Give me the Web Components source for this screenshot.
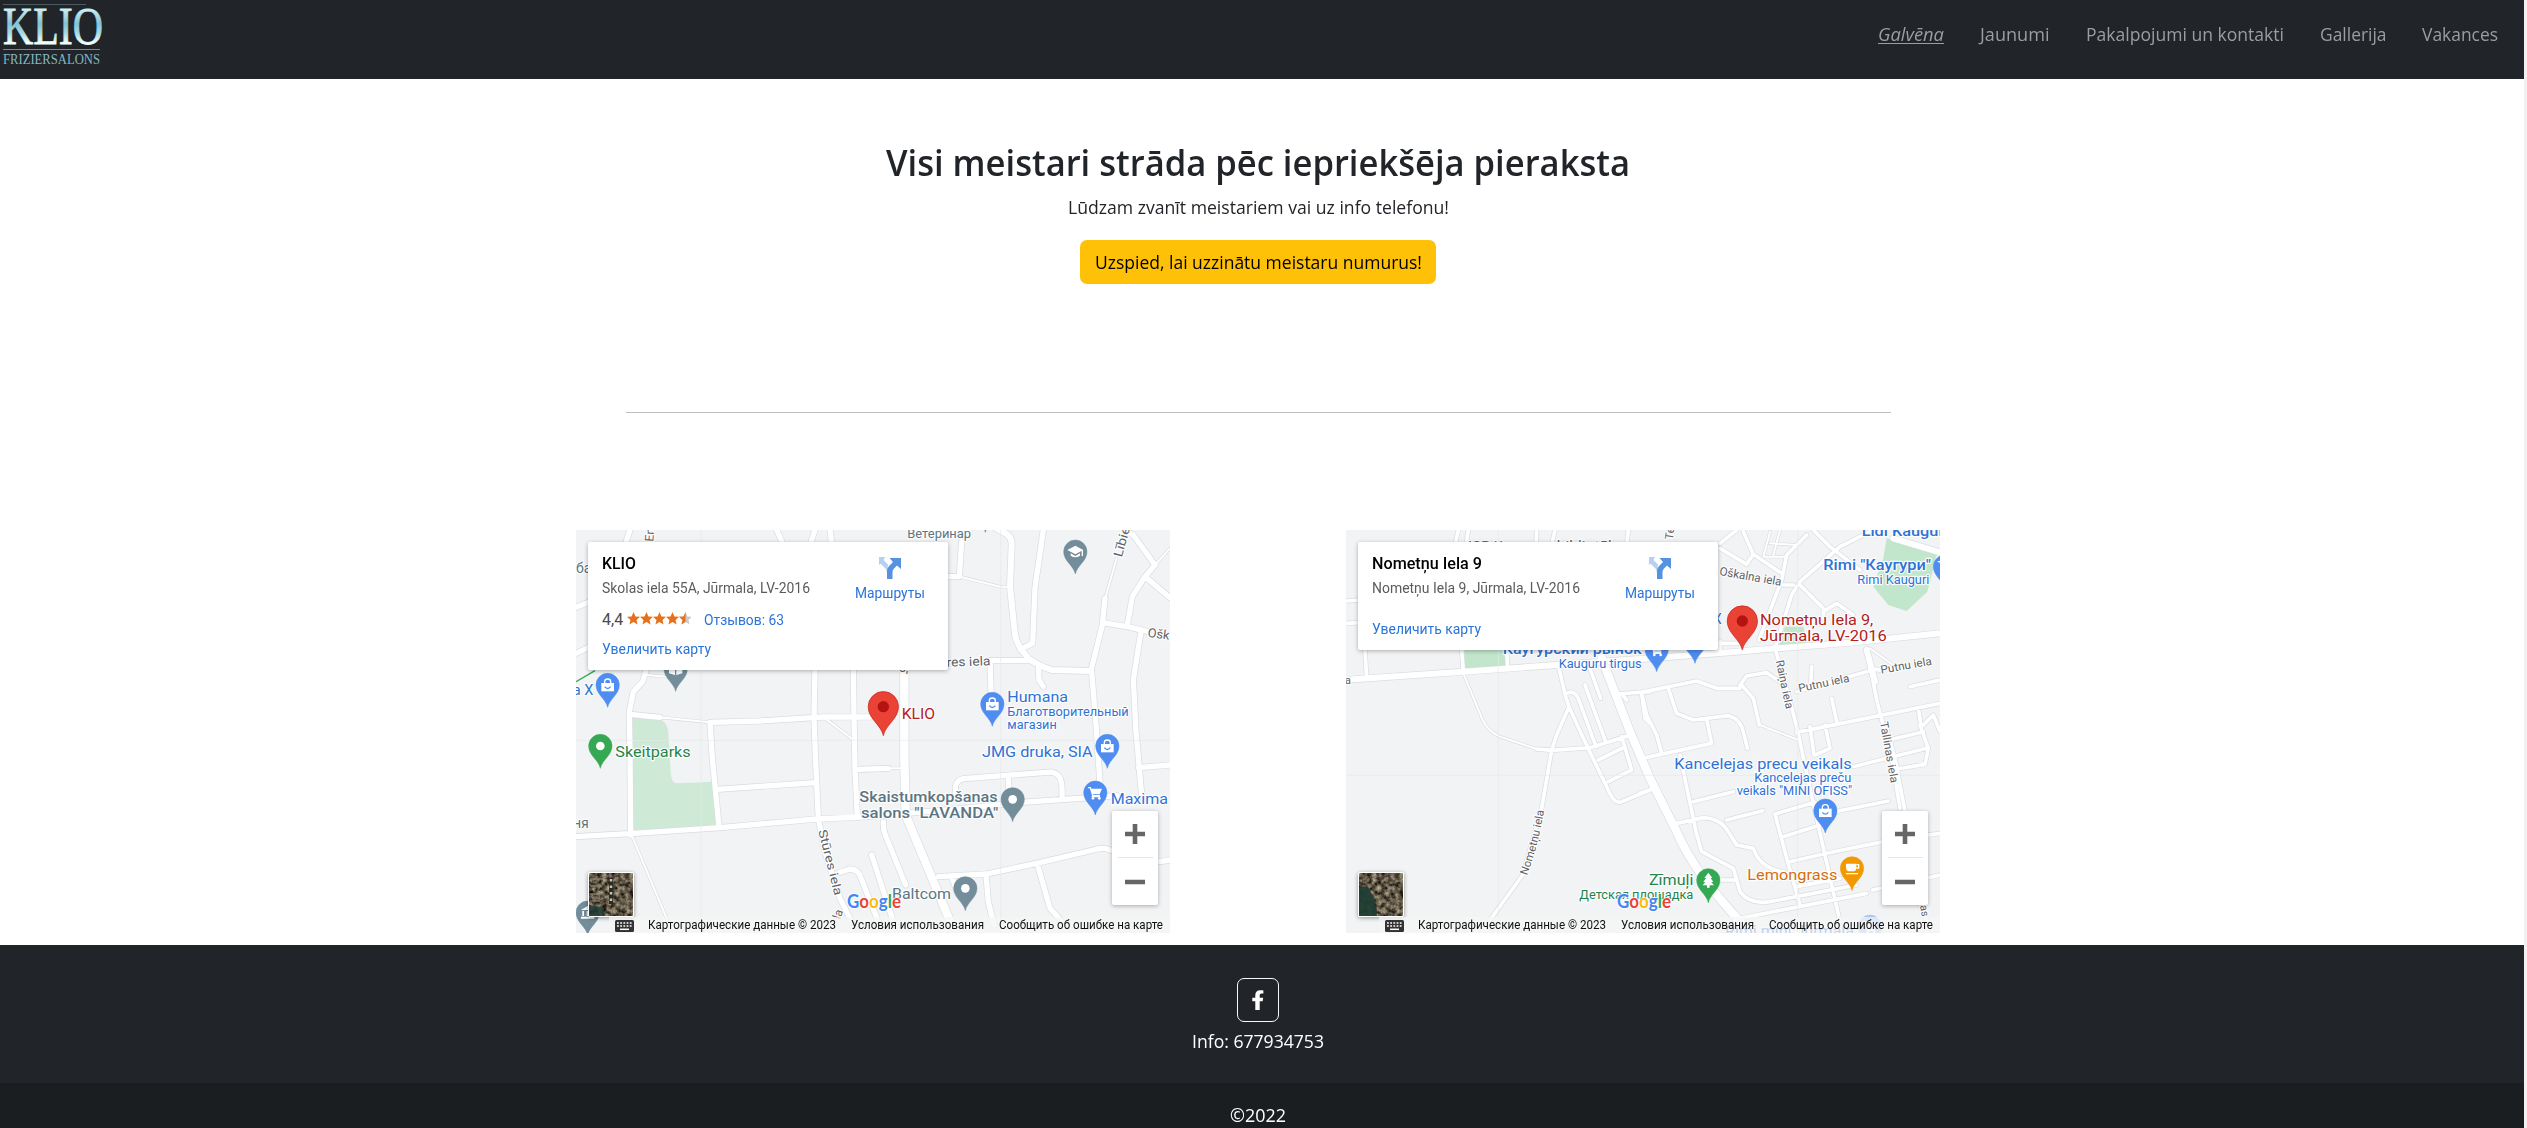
<!DOCTYPE html>
<html lang="lv">
<head>
<meta charset="utf-8">
<title>KLIO</title>
<style>
html,body{margin:0;height:1128px;overflow:hidden;background:#fff}
body{font-family:"Open Sans","Noto Sans",sans-serif;font-size:18.4px;line-height:28px;color:#212529}
</style>
</head>
<body>
<klio-page></klio-page>

<template id="roads-klio"><svg>
  <path class="g" d="M187 575L270 583Q290 590 295 620L302 740Q304 775 320 775L430 770L438 902L190 915Z"/>
  <g data-roads="">
    <path class="t" d="M230 450L290 455M268 577L420 592M765 580L855 648M950 730H1000M187 935L292 1185M1170 155L1290 185H1318M1755 120L1800 70M1640 100L1605 222"/>
    <path d="M180 15L165 60M228 435L218 470L190 500L178 560L180 690L182 930M18 247L60 230M18 385L60 365M620 15L640 60M735 15L720 60M780 15L785 60M180 568L270 577M420 592L570 588L730 578L760 576H900M735 435L732 575L736 690L745 880M850 435L852 575L855 730L862 878M420 592L427 700L447 906M440 793L735 773M18 935L180 926L450 908L740 882L870 876L1000 866L1180 850L1355 832L1560 818L1640 812M865 733L955 730M745 880L765 980L810 1120L845 1190M810 1042L840 1032Q865 1032 873 1060L925 1190M940 890Q938 915 950 940L1007 1080M905 990L970 1190M1158 810L1156 785Q1160 765 1180 761L1430 742Q1455 738 1468 755Q1478 770 1476 818M1315 755L1317 830M1565 440L1578 600L1590 775M1605 220L1597 300L1562 440M1680 25L1690 30L1755 120L1725 155L1800 218M1725 155L1687 215L1672 300M1597 293L1672 305L1735 320M1712 325L1690 465L1698 620L1715 810M1705 728L1800 720M1420 15L1395 187L1388 355L1350 373M1135 155H1168L1175 50M1260 407H1380M1260 407L1263 500M1405 430L1407 465L1420 485M1105 1055L1250 1047L1400 1015L1570 975Q1600 965 1620 975L1770 1010L1800 1005M1145 1057L1160 1095M1248 1050L1255 1130L1272 1200M1402 1017L1440 1150L1480 1195L1540 1205"/>
    <path class="m" d="M1270 5L1300 22Q1325 30 1325 60L1320 185L1335 330Q1340 360 1375 400Q1400 420 1445 435L1562 438"/>
    <path class="b" d="M1003 440V700L1007 870L1145 1200"/>
  </g>
  <path d="M393 15V1224M1292 15V1224M18 646H1800" stroke="#e6e8ea" stroke-width="2" fill="none"/>
  <g class="slate">
    <text x="1012" y="38" textLength="191" font-size="36">Ветеринар</text>
    <text x="18" y="145" font-size="42">ба</text>
    <text x="10" y="908" font-size="42" textLength="46">ня</text>
    <g font-weight="500"><text x="868" y="832" textLength="415" font-size="45">Skaistumkopšanas</text>
    <text x="873" y="880" textLength="412" font-size="45">salons "LAVANDA"</text></g>
    <text x="966" y="1123" textLength="177" font-size="45">Baltcom</text>
  </g>
  <g class="street">
    <text transform="translate(250 50) rotate(-86)" font-size="36">En</text>
    <text x="988" y="440" font-size="38">s,</text>
    <text transform="translate(1130 425) rotate(-2)" textLength="132" font-size="38">res iela</text>
    <text transform="translate(1732 335) rotate(8)" font-size="38">Ošk</text>
    <text transform="translate(1655 98) rotate(-74)" textLength="92" font-size="38">Lībie</text>
    <text transform="translate(745 917) rotate(76)" textLength="202" font-size="36">Stūres iela</text>
    <text transform="translate(810 1185) rotate(-70)" font-size="36">la</text>
  </g>
  <g class="blue">
    <text x="8" y="510" textLength="62" font-size="43">а X</text>
    <text x="1312" y="532" textLength="182" font-size="45">Humana</text>
    <text x="1312" y="572" textLength="364" font-size="36">Благотворительный</text>
    <text x="1312" y="611" textLength="148" font-size="36">магазин</text>
    <text x="1236" y="696" textLength="332" font-size="45">JMG druka, SIA</text>
    <text x="1622" y="836" textLength="172" font-size="45">Maxima</text>
  </g>
  <text class="green" x="136" y="696" textLength="226" font-size="45">Skeitparks</text>
  <path d="M18 470L75 437" stroke="#34a853" stroke-width="4"/>
  <g data-pin="113 480 #4f8df0 bag"></g><g data-pin="317 432 #738d9a book"></g>
  <g data-pin="1516 80 #738d9a school"></g><g data-pin="1246 -45 #738d9a dot"></g>
  <g data-pin="1267 537 #4f8df0 bag"></g><g data-pin="91 663 #34a853 dot"></g>
  <g data-pin="1612 663 #4f8df0 bag"></g><g data-pin="1576 803 #4f8df0 cart"></g>
  <g data-pin="1328 823 #738d9a dot"></g><g data-pin="1186 1090 #738d9a dot"></g>
  <g data-pin="53 1163 #738d9a museum"></g><g data-pin="940 545 #ea4335 red"></g>
  <text class="red" x="995" y="582" textLength="100" font-size="46">KLIO</text>
</svg></template>

<template id="roads-nometnu"><svg>
  <path class="g2" d="M373 375H495V432L373 438ZM1640 40L1790 90L1762 200L1700 258L1645 240L1600 185L1630 100ZM1335 305H1390L1400 355L1315 368Z"/>
  <g data-roads="">
    <path class="t" d="M370 445L428 585Q445 620 480 635L590 672M1590 370L1660 420M1260 600L1375 645M1270 95L1290 20M1270 95H1340M1290 55L1370 60M1320 15L1300 90"/>
    <path d="M355 15L345 60M385 15L378 60M590 15L588 60M645 15L635 60M865 15L860 60M18 228L60 225M18 295L60 293M75 375L80 460M365 375L370 440M500 375L503 430M590 672L635 676L750 668L865 632M655 420L675 508L687 545L650 630L635 675L605 850L548 1050L450 1185M687 545L730 640L800 785Q820 835 840 832L930 795M675 508Q700 490 715 520L768 665M735 480L797 650M750 430L782 520M830 507L930 500M845 507L860 525M905 507L915 580L930 595M775 705L850 668M845 635L875 735L805 770M905 505L920 570L950 630L965 685M1025 355H1200M1140 350V380M900 503L1070 468L1130 490H1200M985 490L1010 565L1060 585L1165 572Q1200 580 1210 620L1222 670M1205 480L1240 520L1258 600M1200 480L1220 453L1280 443L1320 470M1100 582L1115 655L920 697M1500 65L1380 170L1355 210L1305 370L1340 490L1370 605L1412 800L1500 1190M1600 15L1500 65M1400 30L1340 90L1325 165L1257 345M1140 70L1220 118L1240 88L1210 20M1240 88L1325 145M1140 55L1190 15M1420 15L1470 65L1560 135M1330 180H1360M1380 180L1450 250M1450 280V260L1490 235L1540 270M1580 370L1610 525L1655 700L1680 850M1637 600L1665 700L1695 860M1590 430L1630 437M1370 500L1590 437M1415 425L1412 480M1475 520L1490 590M1710 485L1800 465M1370 622L1800 535M1735 550L1745 615M1410 605L1422 690M1455 600L1470 670L1425 690M1750 600L1780 570L1800 620M1660 642L1750 620M1540 725L1760 670M1740 600L1765 670L1755 718L1670 732M900 805L945 790M1020 690L1068 920L1085 980L1180 1030L1200 1100Q1230 1140 1290 1130L1550 1080M1010 895L1090 878Q1140 880 1165 920L1190 960L1240 970Q1260 1030 1330 1040M1060 830L1180 800M1160 885L1268 857M1305 867L1425 832M1305 867L1340 1000L1380 1140M1330 935L1440 900M1460 865L1645 828M1350 1010L1460 985L1630 950L1800 925M1370 1085L1500 1060M1200 1180L1580 1105M1598 1095L1800 1050M1140 1065H1190M1740 1140L1775 1215"/>
    <path class="m" d="M40 463L370 440L650 420L900 402L1170 382L1310 370L1530 353L1800 325M1580 375L1605 470M1660 40L1800 82"/>
    <path class="b" d="M785 400L870 620L930 760L1010 920Q1060 1040 1210 1200"/>
  </g>
  <path d="M475 15V1224M1373 15V1224M18 751H1800" stroke="#e6e8ea" stroke-width="2" fill="none"/>
  <g class="street">
    <text x="372" y="74" font-size="40" textLength="116">JCB K</text><text x="650" y="74" font-size="40" textLength="178">bibliotēk</text>
    <text transform="translate(998 45) rotate(-82)" font-size="34">Te</text>
    <text transform="translate(1137 150) rotate(10)" font-size="36" textLength="188">Oškalna iela</text>
    <text x="14" y="476" font-size="34">а</text>
    <text transform="translate(1307 408) rotate(78)" font-size="34" textLength="148">Raiņa iela</text>
    <text transform="translate(1378 502) rotate(-12)" font-size="34" textLength="155">Putnu iela</text>
    <text transform="translate(1624 446) rotate(-10)" font-size="34" textLength="155">Putnu iela</text>
    <text transform="translate(1620 592) rotate(80)" font-size="34" textLength="186">Tallinas iela</text>
    <path id="bend" d="M561 1052Q597 955 613 850" fill="none"/>
    <text font-size="34"><textPath href="#bend" textLength="202" lengthAdjust="spacingAndGlyphs">Nometņu iela</textPath></text>
    <text transform="translate(1737 1125) rotate(80)" font-size="32">nas</text>
  </g>
  <g class="blue">
    <g font-weight="500"><text x="1565" y="32" font-size="42" textLength="260">Lidl Kauguri</text>
    <text x="1450" y="136" font-size="42" textLength="323">Rimi "Каугури"</text>
    <text x="488" y="388" font-size="42" textLength="418">Каугурский рынок</text></g>
    <text x="1552" y="177" font-size="36" textLength="216">Rimi Kauguri</text>
    <text x="656" y="429" font-size="36" textLength="249">Kauguru tirgus</text>
    <text x="1118" y="298" font-size="43">X</text>
    <text x="1003" y="732" font-size="44" textLength="532">Kancelejas precu veikals</text>
    <text x="1243" y="771" font-size="36" textLength="291">Kancelejas preču</text>
    <text x="1190" y="810" font-size="36" textLength="346">veikals "MINI OFISS"</text>
    <text x="1155" y="1234" font-size="43" textLength="387">Rimi mini Jūrmala</text>
  </g>
  <text x="1222" y="1066" fill="#d56e0c" font-size="44" textLength="270">Lemongrass</text>
  <g class="green"><text x="927" y="1081" font-size="44" textLength="133">Zīmuļi</text>
  <text x="718" y="1123" font-size="36" textLength="342">Детская площадка</text></g>
  <g data-pin="950 373 #4f8df0 cart"></g><g data-pin="1065 348 #4f8df0 bag"></g>
  <g data-pin="1815 125 #4f8df0 cart"></g><g data-pin="1456 857 #4f8df0 bag"></g>
  <g data-pin="1536 1030 #f29900 cup"></g><g data-pin="1105 1066 #34a853 tree"></g>
  <g data-pin="1590 1205 #a9c6f5 cart"></g><g data-pin="1207 288 #ea4335 red"></g>
  <g class="red" font-size="45"><text x="1260" y="300" textLength="340">Nometņu Iela 9,</text>
  <text x="1260" y="348" textLength="380">Jūrmala, LV-2016</text></g>
</svg></template>

<script>
const define = (name, html, after) => customElements.define(name, class extends HTMLElement {
  connectedCallback() {
    if (this.shadowRoot) return;
    this.attachShadow({mode: 'open'}).innerHTML = typeof html === 'function' ? html(this) : html;
    if (after) after(this, this.shadowRoot);
  }
});

/* Text condensed or widened to an exact width in pixels. */
define('fit-text', el => `<style>:host{display:inline-block;flex:none;white-space:nowrap;width:${el.getAttribute('w')}px}
  span{display:inline-block;transform-origin:0 50%}:host([underlined]) span{text-decoration:underline;text-decoration-thickness:1px;text-underline-offset:2px}</style><span><slot></slot></span>`,
  (el, root) => {
    const s = root.querySelector('span'), n = s.getBoundingClientRect().width;
    if (n) s.style.transform = `scaleX(${el.getAttribute('w') / n})`;
  });

define('klio-logo', `<style>:host{display:block;width:110px;height:79px}svg{display:block;overflow:visible}</style>
<svg width="110" height="79"><defs><linearGradient id="k" x1="0" y1="0" x2="0" y2="1">
<stop offset=".2" stop-color="#cdeef3"/><stop offset=".45" stop-color="#83c3d8"/><stop offset=".62" stop-color="#a9dbe5"/><stop offset=".78" stop-color="#f0fdfb"/></linearGradient></defs>
<path d="M3 4.5H86" stroke="#4b5c60"/><path d="M3 49.5H100" stroke="#6e8f95"/>
<text x="3" y="44" font-family="Liberation Serif" fill="url(#k)" stroke="url(#k)" stroke-width=".8" font-size="52" textLength="100" lengthAdjust="spacingAndGlyphs">KLIO</text>
<text x="3" y="63.5" font-family="Liberation Serif" fill="#84b8c4" font-size="15.5" textLength="97" lengthAdjust="spacingAndGlyphs">FRIZIERSALONS</text></svg>`);

define('nav-link', el => `<style>:host{display:block;color:#9b9d9e;height:28px}
:host([active]) a{font-style:italic}a{color:inherit}</style>
<a><fit-text w="${el.getAttribute('w')}" ${el.hasAttribute('active') ? 'underlined' : ''}><slot></slot></fit-text></a>`);

define('site-header', `<style>:host{display:flex;justify-content:space-between;height:79px;background:#212529}
nav{display:flex;gap:36px;padding:20px 26px 0 0}</style>
<klio-logo></klio-logo><nav>
<nav-link active w="66">Galvēna</nav-link><nav-link w="69.5">Jaunumi</nav-link><nav-link w="198">Pakalpojumi un kontakti</nav-link><nav-link w="66.5">Gallerija</nav-link><nav-link w="76">Vakances</nav-link></nav>`);

define('booking-notice', `<style>:host{display:flex;flex-direction:column;align-items:center;padding-top:61px}
h2{margin:0;font-size:36.8px;line-height:44px;font-weight:600}p{margin:9px 0 0;line-height:28px}
button{margin:19px 0 0;width:356px;height:44px;border:0;padding:0;border-radius:7px;background:#ffc107;color:#000;font:inherit;line-height:28px}
hr{width:1265px;height:1px;border:0;background:#bcbec0;margin:128px 0 0}</style>
<h2><fit-text w="744">Visi meistari strāda pēc iepriekšēja pieraksta</fit-text></h2>
<p><fit-text w="381">Lūdzam zvanīt meistariem vai uz info telefonu!</fit-text></p>
<button><fit-text w="327">Uzspied, lai uzzinātu meistaru numurus!</fit-text></button><hr>`);

define('star-rating', `<style>:host{display:block;height:13px}svg{display:block}</style>
<svg width="64" height="13" viewBox="0 0 64 13"><defs><path id="s" d="M6.5 0L8.4 4.4L13 4.8L9.5 8L10.6 12.6L6.5 10.1L2.4 12.6L3.5 8L0 4.8L4.6 4.4Z"/><clipPath id="h"><path d="M0 0H6.5V13H0Z"/></clipPath></defs>
<g fill="#e7711b"><use href="#s"/><use href="#s" x="13"/><use href="#s" x="26"/><use href="#s" x="39"/></g><use href="#s" x="52" fill="#c9cbcd"/><g transform="translate(52)" clip-path="url(#h)"><use href="#s" fill="#e7711b"/></g></svg>`);

define('place-card', el => `<style>:host{display:flex;justify-content:space-between;box-sizing:border-box;width:360px;height:${el.hasAttribute('rating') ? 128 : 108}px;padding:12px 23px 0 14px;background:#fff;border-radius:2px;box-shadow:0 1px 4px rgba(0,0,0,.3);font:13.8px/16px Roboto,sans-serif;color:#1a73e8}
h3{margin:0;font-size:16.1px;line-height:20px;font-weight:500;color:#000}
.a{margin-top:6px;color:#5b5b5b;height:16px}.r{display:flex;margin-top:16px;height:16px}.r b{font-weight:400;font-size:16px;color:#4b4b4b;width:25px}
.r star-rating{width:64px;margin-right:13px}.l{margin-top:${el.hasAttribute('rating') ? 13 : 25}px;height:16px;color:#2b74d9}
.d{display:flex;flex-direction:column;align-items:center;padding-top:3px;gap:6px;color:#2b74d9}.d svg{display:block}.r fit-text{color:#2b74d9}</style>
<div><h3><slot></slot></h3><div class="a"><slot name="address"></slot></div>
${el.hasAttribute('rating') ? `<div class="r"><b>${el.getAttribute('rating')}</b><star-rating></star-rating><fit-text w="80">Отзывов: 63</fit-text></div>` : ''}
<div class="l"><fit-text w="109">Увеличить карту</fit-text></div></div>
<div class="d"><svg width="22" height="22" viewBox="0 0 22 22"><path d="M0 1.5L8.5 10L12 13V16H8L7 12L1.5 6.5Z" fill="#b4d0f5"/><path d="M0 0H6L4.500 3L9.500 8L7.500 11L2.500 6L0 8Z" fill="#b4d0f5"/><path d="M8 22V14Q8 11 10.5 8.5L14 5L10.500 1H22V12L18 8.5L15 11.5Q13.5 13 13.5 15V22Z" fill="#5592e0"/></svg><fit-text w="70">Маршруты</fit-text></div>`);

define('zoom-buttons', `<style>:host{display:flex;flex-direction:column;width:46px;height:94px;background:#fff;border-radius:2px;box-shadow:0 1px 4px rgba(0,0,0,.3)}svg{display:block}</style>
<svg width="46" height="94"><path d="M13 23H33M23 13V33M13 71H33" stroke="#666" stroke-width="4.6"/><path d="M6 46.5H41" stroke="#e6e6e6"/></svg>`);

define('satellite-thumb', el => `<style>:host{display:block;width:44px;height:43px;border:1.5px solid #fff;border-radius:2px;box-shadow:0 1px 4px rgba(0,0,0,.4);overflow:hidden}svg{display:block}</style>
<svg width="44" height="43"><filter id="n" x="0" y="0" width="1" height="1" color-interpolation-filters="sRGB"><feTurbulence type="fractalNoise" baseFrequency=".22" numOctaves="3" seed="4"/><feColorMatrix values="1 0 0 0 -.12  .95 0 0 0 -.13  .8 0 0 0 -.12  0 0 0 0 1"/></filter>
<rect width="44" height="43" filter="url(#n)"/>${el.getAttribute('kind') === 'town'
? '<path d="M0 32L14 34L16 43H0Z" fill="#203b35" opacity=".85"/><g fill="none" stroke="#8b8577" stroke-width="1.6" opacity=".8"><path d="M1 6H13M1 13H13M1 21H13M1 28H11"/></g><path d="M22 5V31" stroke="#292c26" stroke-width="4"/><path d="M22 6V31" stroke="#c9c6ae" stroke-width="2.5" stroke-dasharray="2.5 4"/>'
: '<path d="M0 14H9L14 23L17 34L18 43H0Z" fill="#203e34" opacity=".95"/>'}</svg>`);

define('google-logo', `<style>:host{display:block;width:58px;height:26px}svg{display:block;overflow:visible}text{paint-order:stroke;stroke:#fff;stroke-width:2px;stroke-opacity:.8;font:700 18px Lato,sans-serif}</style>
<svg width="58" height="26"><text x="1" y="18" textLength="54" lengthAdjust="spacingAndGlyphs"><tspan fill="#4285f4">G</tspan><tspan fill="#ea4335">o</tspan><tspan fill="#fbbc05">o</tspan><tspan fill="#4285f4">g</tspan><tspan fill="#34a853">l</tspan><tspan fill="#ea4335">e</tspan></text></svg>`);

define('map-credits', `<style>:host{display:flex;box-sizing:border-box;width:561px;height:16px;padding:0 0 0 6px;background:rgba(245,245,245,.72);font:12.2px/16px Roboto,sans-serif;color:#111}svg{display:block;flex:none;margin:3px 14px 0 0}fit-text{margin-right:15px}fit-text:last-child{margin:0}</style>
<svg width="19" height="12"><rect width="19" height="12" rx="1.5" fill="#333"/><path d="M2 3H17M2 6H17" stroke="#fff" stroke-width="1.6" stroke-dasharray="1.8 1.4"/><path d="M5 9.3H14" stroke="#fff" stroke-width="1.5"/></svg>
<fit-text w="188">Картографические данные © 2023</fit-text><fit-text w="133">Условия использования</fit-text><fit-text w="164">Сообщить об ошибке на карте</fit-text>`);

const glyphs = {
  dot: '<circle r="13" fill="#fff"/>',
  red: '',
  bag: '<path d="M-19 -6H19V19H-19Z" fill="#fff"/><path d="M-9 -5V-10Q-9 -18 0 -18Q9 -18 9 -10V-5" fill="none" stroke="#fff" stroke-width="4"/><path d="M-9 5Q0 16 9 5" fill="none" stroke="#4f8df0" stroke-width="4"/>',
  cart: '<path d="M-22 -15H-15L-8 8H14M-11 12H14" fill="none" stroke="#fff" stroke-width="4"/><path d="M-14 -12H20L13 4H-9Z" fill="#fff"/><circle cx="-7" cy="17" r="4" fill="#fff"/><circle cx="12" cy="17" r="4" fill="#fff"/>',
  book: '<path d="M-20 -12L0 -6L20 -12V13L0 19L-20 13Z" fill="#fff"/><path d="M0 -6V19" stroke="#738d9a" stroke-width="4"/>',
  school: '<path d="M0 -18L24 -5L0 8L-24 -5Z" fill="#fff"/><path d="M-14 5V12Q0 22 14 12V5L0 13Z" fill="#fff"/><path d="M21 -5V13" stroke="#fff" stroke-width="4"/>',
  museum: '<path d="M-20 -8L0 -20L20 -8ZM-16 -5H-11V10H-16ZM-3 -5H3V10H-3ZM11 -5H16V10H11ZM-20 12H20V18H-20Z" fill="#fff"/>',
  cup: '<path d="M-18 -14H13V-2Q13 9 2 9H-7Q-18 9 -18 -2Z" fill="#fff"/><path d="M13 -11H20V-1H13M-18 16H18" fill="none" stroke="#fff" stroke-width="4"/>',
  tree: '<path d="M0 -23L12 -7H7L15 5H9L17 15H4V22H-4V15H-17L-9 5H-15L-7 -7H-12Z" fill="#fff"/>'
};

define('street-map', el => `<style>:host{display:block;position:relative;width:594px;height:403px;overflow:hidden;background:#f1f3f4}
.map{display:block}.map text{font-family:Roboto,sans-serif;paint-order:stroke;stroke:#fff;stroke-width:7px;stroke-linejoin:round;stroke-opacity:.9}
.case path,.fill path{fill:none;stroke-linejoin:round;stroke-linecap:round}
.case path{stroke:#d9dce0;stroke-width:calc(var(--w) + 4px)}.fill path{stroke:#fff;stroke-width:var(--w)}
.case,.fill{--w:${el.getAttribute('road')}px}.t{--w:6px}.m{--w:18px}.b{--w:25px}
.g{fill:#ceead6}.g2{fill:#c1e6cb}.slate{fill:#5b7583}.street{fill:#5e6267}.blue{fill:#2f72d6}.green{fill:#24834a}.red{fill:#b3201b}
.card,.thumb,.zoom,.logo,.credits{position:absolute}.card{left:12px;top:12px}.thumb{left:12px;top:342px}.zoom{right:12px;bottom:28px}.logo{left:270px;top:360px}.credits{right:0;bottom:0}</style>
<svg class="map" width="594" height="403" viewBox="18 15 1782 1209"></svg>
<div class="card"><slot></slot></div><satellite-thumb class="thumb" kind="${el.getAttribute('thumb')}"></satellite-thumb><google-logo class="logo"></google-logo><map-credits class="credits"></map-credits><zoom-buttons class="zoom"></zoom-buttons>`,
(el, root) => {
  const svg = root.querySelector('svg');
  const art = document.getElementById(el.getAttribute('art')).content.querySelector('svg').cloneNode(true);
  svg.append(...art.childNodes);
  const roads = svg.querySelector('[data-roads]'), casing = roads.cloneNode(true);
  casing.setAttribute('class', 'case'); roads.setAttribute('class', 'fill'); roads.before(casing);
  svg.querySelectorAll('text[textLength]').forEach(t => t.setAttribute('lengthAdjust', 'spacingAndGlyphs'));
  svg.querySelectorAll('[data-pin]').forEach(g => {
    const [x, y, c, k] = g.dataset.pin.split(' '), big = k === 'red';
    g.setAttribute('transform', `translate(${x} ${y})`);
    g.innerHTML = `<path transform="scale(${big ? 1.3 : 1})" d="M0 67C-5 42 -35 28 -35 0A35 35 0 0 1 35 0C35 28 5 42 0 67Z" fill="${c}" stroke="${big ? '#c5221f' : c}" stroke-width="1.5"/>` + (big ? '<circle r="17" fill="#b31412"/>' : glyphs[k]);
  });
});

define('site-footer', `<style>:host{display:flex;flex-direction:column;height:183px;background:#212529;color:#fff}
.i{display:flex;flex-direction:column;align-items:center;height:105px;padding:33px 8px 0 0}
.f{display:flex;box-sizing:border-box;width:42px;height:44px;border:1px solid #f8f9fa;border-radius:7px;align-items:center;justify-content:center;margin-bottom:5px}
.c{display:flex;justify-content:center;height:27px;padding:18px 8px 0 0;background:#1a1e21}</style>
<div class="i"><div class="f"><svg width="12" height="20" viewBox="0 0 12 20"><path d="M3.3 20V11.3H.3V7.7H3.3V5.2C3.3 2 5.2 .2 8.3 .2C9.7 .2 11.4 .4 11.4 .4V3.6H9.8C8.2 3.6 7.7 4.5 7.7 5.5V7.7H11.2L10.6 11.3H7.7V20Z" fill="#fff"/></svg></div>
<fit-text w="132">Info: 677934753</fit-text></div><div class="c"><fit-text w="56">©2022</fit-text></div>`);

define('klio-page', `<style>:host{display:flex;height:1128px;background:#f1f1f1}
.p{display:flex;flex-direction:column;width:2524px;background:#fff}main{padding-right:8px;height:866px}
.maps{display:flex;justify-content:center;gap:176px;margin-top:117px}</style>
<div class="p"><site-header></site-header><main><booking-notice></booking-notice><div class="maps">
<street-map art="roads-klio" thumb="town" road="16"><place-card rating="4,4"><fit-text w="34">KLIO</fit-text><fit-text slot="address" w="208">Skolas iela 55A, Jūrmala, LV-2016</fit-text></place-card></street-map>
<street-map art="roads-nometnu" thumb="lake" road="11"><place-card><fit-text w="110">Nometņu Iela 9</fit-text><fit-text slot="address" w="208">Nometņu Iela 9, Jūrmala, LV-2016</fit-text></place-card></street-map>
</div></main><site-footer></site-footer></div>`);
</script>
</body>
</html>
